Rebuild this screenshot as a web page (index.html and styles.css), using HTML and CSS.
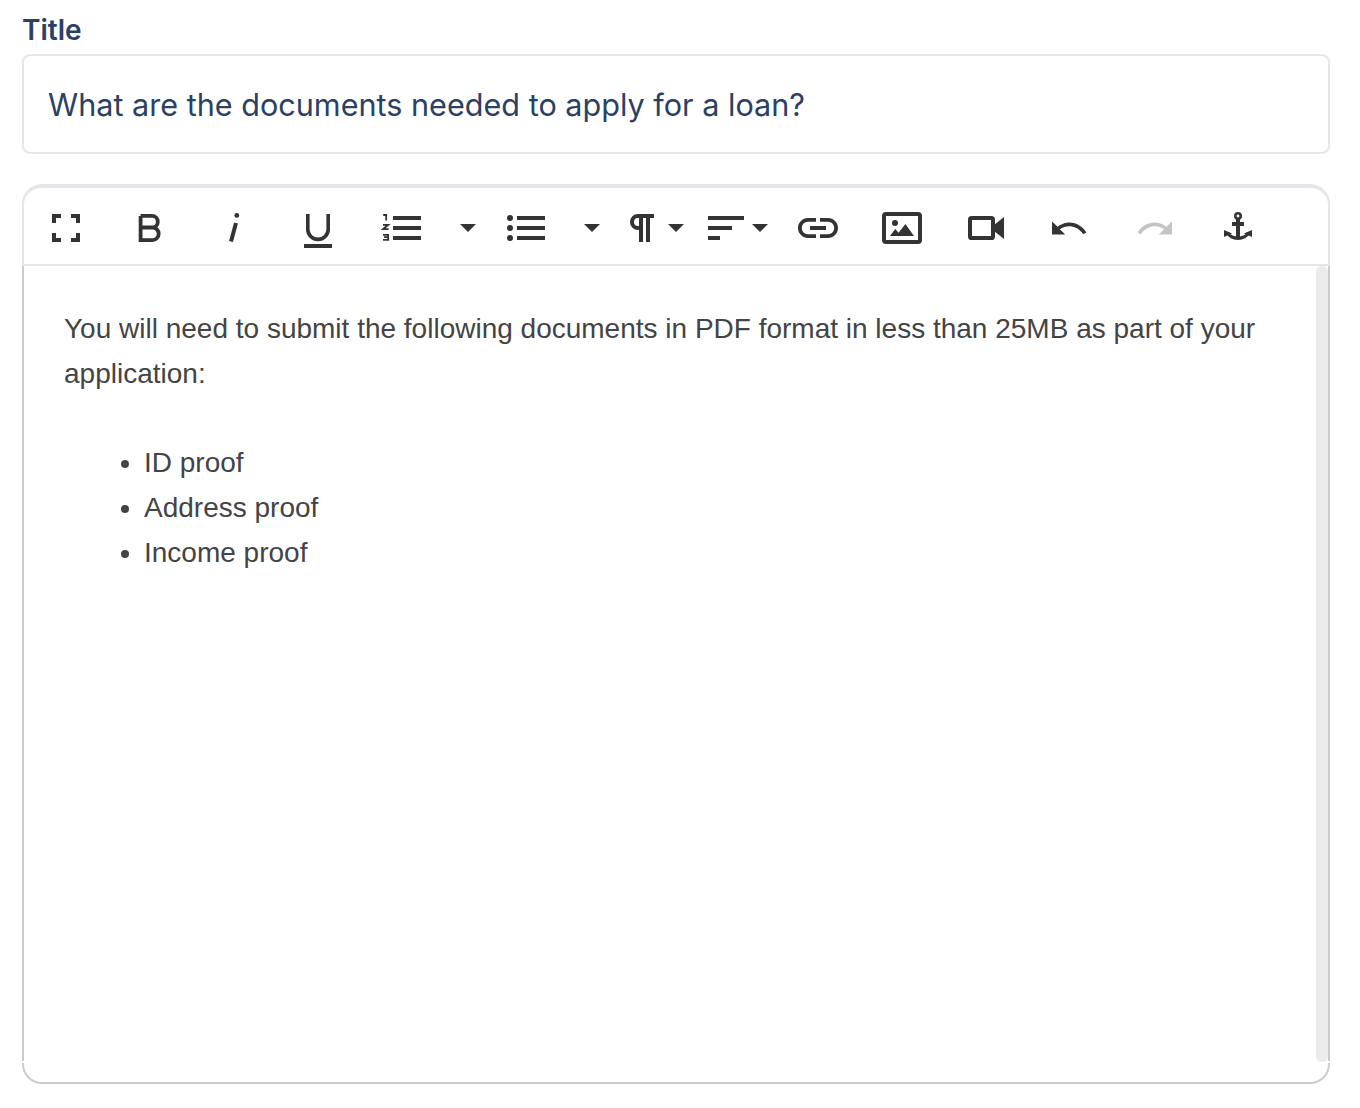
FILE: index.html
```html
<!DOCTYPE html>
<html lang="en">
<head>
<meta charset="utf-8">
<title>Edit article</title>
<link rel="stylesheet" href="styles.css">
</head>
<body>
<main class="form">
  <label class="field-label" for="title">Title</label>
  <div class="title-box" id="title">What are the documents needed to apply for a loan?</div>

  <section class="editor">
    <div class="toolbar">
      <button class="tool"><svg viewBox="0 0 24 24"><path d="M5 5h4.500v2H7v2.500H5zM19 5h-4.500v2H17v2.500h2zM5 19h4.500v-2H7v-2.500H5zM19 19h-4.500v-2H17v-2.500h2z"/></svg></button>
      <button class="tool"><svg viewBox="0 0 24 24"><path class="line" stroke-width="1.900" d="M7.300 5.950V18.050H13.200a3.150 3.150 0 0 0 0-6.300H7.300M13 11.750a2.900 2.900 0 0 0 0-5.800H7.300"/></svg></button>
      <button class="tool"><svg viewBox="0 0 24 24"><circle cx="13.400" cy="5.700" r="1.200"/><path class="line" stroke-width="2" d="M13 9.500 10.500 18.800"/></svg></button>
      <button class="tool"><svg viewBox="0 0 24 24"><path class="line" stroke-width="1.800" d="M6.900 5V12.600a5.100 5.100 0 0 0 10.200 0V5"/><rect x="5" y="20" width="14" height="2"/></svg></button>
      <button class="tool tool-wide"><svg viewBox="0 0 24 24"><path d="M7.500 6h14v2h-14zM7.500 11h14v2h-14zM7.500 16h14v2h-14z"/><path class="line" stroke-width=".9" d="M2.600 5.500h1.500V8.200M2.500 10.400h2.600L2.500 12.600h2.800M2.500 15.400h2.600v2.500H2.500M3 16.600h2"/></svg><span class="caret caret-far"></span></button>
      <button class="tool tool-wide"><svg viewBox="0 0 24 24"><circle cx="4" cy="7" r="1.500"/><circle cx="4" cy="12" r="1.500"/><circle cx="4" cy="17" r="1.500"/><path d="M7.500 6h14v2h-14zM7.500 11h14v2h-14zM7.500 16h14v2h-14z"/></svg><span class="caret caret-far"></span></button>
      <button class="tool tool-split"><svg viewBox="0 0 24 24"><path fill-rule="evenodd" d="M18 5H10a4 4 0 0 0 0 8h.5v6h2V7H14v12h2V7h2zM10.500 7v4H10a2 2 0 0 1 0-4z"/></svg><span class="caret"></span></button>
      <button class="tool tool-split"><svg viewBox="0 0 24 24"><path d="M3 6h18v2H3zM3 11h12v2H3zM3 16h6v2H3z"/></svg><span class="caret"></span></button>
      <button class="tool"><svg viewBox="0 0 24 24"><path d="M3.900 12c0-1.710 1.390-3.100 3.100-3.100h4V7H7c-2.760 0-5 2.240-5 5s2.240 5 5 5h4v-1.900H7c-1.710 0-3.100-1.390-3.100-3.100zM8 13h8v-2H8v2zm9-6h-4v1.900h4c1.710 0 3.100 1.390 3.100 3.100s-1.390 3.100-3.100 3.100h-4V17h4c2.760 0 5-2.240 5-5s-2.240-5-5-5z"/></svg></button>
      <button class="tool"><svg viewBox="0 0 24 24"><rect class="line" stroke-width="2" x="3" y="5" width="18" height="14" rx="1"/><circle cx="8.500" cy="9.500" r="1.500"/><path d="M6 16l2.600-3.500 1.700 1.900 3.400-4.400L18 16z"/></svg></button>
      <button class="tool"><svg viewBox="0 0 24 24"><rect class="line" stroke-width="2" x="4" y="7" width="11.500" height="10" rx=".8"/><path d="M16 10.500 21 6.500v11l-5-4z"/></svg></button>
      <button class="tool"><svg viewBox="0 0 24 24"><path d="M10.400 9.400c-1.700.3-3.200.9-4.600 2L3 8.700v6.600h6.600l-2.700-2.700c3.500-2.600 8.500-1.800 11.100 1.700.2.3.4.5.5.8l1.700-.9C18 10.800 14.200 8.700 10.400 9.400z"/></svg></button>
      <button class="tool tool-off"><svg viewBox="0 0 24 24"><path d="M13.600 9.400c1.700.3 3.200.9 4.600 2L21 8.700v6.600h-6.600l2.700-2.700C13.600 10 8.600 10.800 6 14.300c-.2.3-.4.5-.5.8l-1.700-.9C6 10.800 9.800 8.700 13.600 9.400z"/></svg></button>
      <button class="tool"><svg viewBox="0 0 24 24"><path fill-rule="evenodd" d="M12 4a2 2 0 1 1 0 4 2 2 0 0 1 0-4zM12 5.300a.7.7 0 1 0 0 1.400.7.7 0 0 0 0-1.400z"/><path d="M11 7.500h2V17h-2zM9 9h6v2H9z"/><path class="line" stroke-width="1.700" d="M6.800 14.500C8 16.500 10 17.100 12 17.100s4-.6 5.200-2.600"/><path d="M5 13v3.500l4-1.700zM19 13v3.500l-4-1.700z"/></svg></button>
    </div>
    <div class="content">
      <p>You will need to submit the following documents in PDF format in less than 25MB as part of your application:</p>
      <ul>
        <li>ID proof</li>
        <li>Address proof</li>
        <li>Income proof</li>
      </ul>
      <div class="scroll-thumb"></div>
    </div>
    <div class="editor-foot"></div>
  </section>
</main>
</body>
</html>
```
FILE: styles.css
```css
* { box-sizing: border-box; }
html, body { margin: 0; padding: 0; background: #fff; }
.form { width: 1308px; margin-left: 22px; display: flex; flex-direction: column; }
.field-label {
  font: 600 28px/36px Inter, sans-serif;
  color: #2b4164;
  height: 54px;
  padding: 12px 0 0 0;
}
.title-box {
  height: 100px;
  border: 2px solid #e3e6ea;
  border-radius: 8px;
  padding: 1px 25px 0 24px;
  display: flex;
  align-items: center;
  font: 400 30.6px/40px Inter, sans-serif;
  color: #2b4164;
}
.editor { margin-top: 30px; display: flex; flex-direction: column; height: 900px; }
.toolbar {
  display: flex;
  flex: none;
  height: 82px;
  border: 2px solid #e3e6ea;
  border-top-width: 4px;
  border-radius: 20px 20px 0 0;
  padding-top: 16px;
}
.tool {
  all: unset;
  box-sizing: border-box;
  flex: none;
  width: 84px;
  height: 48px;
  padding-left: 18px;
  display: flex;
  align-items: center;
}
.tool svg { width: 48px; height: 48px; flex: none; fill: #333; }
.tool .line { fill: none; stroke: #333; }
.tool-wide { width: 124px; }
.tool-split { padding-left: 10px; }
.tool-off svg { fill: #c4c4c4; }
.caret {
  width: 0;
  height: 0;
  border-left: 8px solid transparent;
  border-right: 8px solid transparent;
  border-top: 8px solid #333;
  margin-left: 2px;
}
.caret-far { margin-left: 34px; }
.content {
  flex: 1;
  position: relative;
  border-left: 2px solid #ccc;
  border-right: 2px solid #ccc;
  padding: 40px 40px 0;
  font: 400 28px/45px "Liberation Sans", Arial, sans-serif;
  color: #444;
}
.content p { margin: 0 0 44px; }
.content ul { margin: 0; padding: 0 0 0 80px; }
.scroll-thumb {
  position: absolute;
  top: 0;
  right: 0;
  bottom: -1px;
  width: 12px;
  background: #ebebeb;
  border-radius: 8px;
}
.editor-foot {
  flex: none;
  height: 21px;
  margin-top: 2px;
  border: 2px solid #ccc;
  border-top: 0;
  border-radius: 0 0 20px 20px;
}
```
